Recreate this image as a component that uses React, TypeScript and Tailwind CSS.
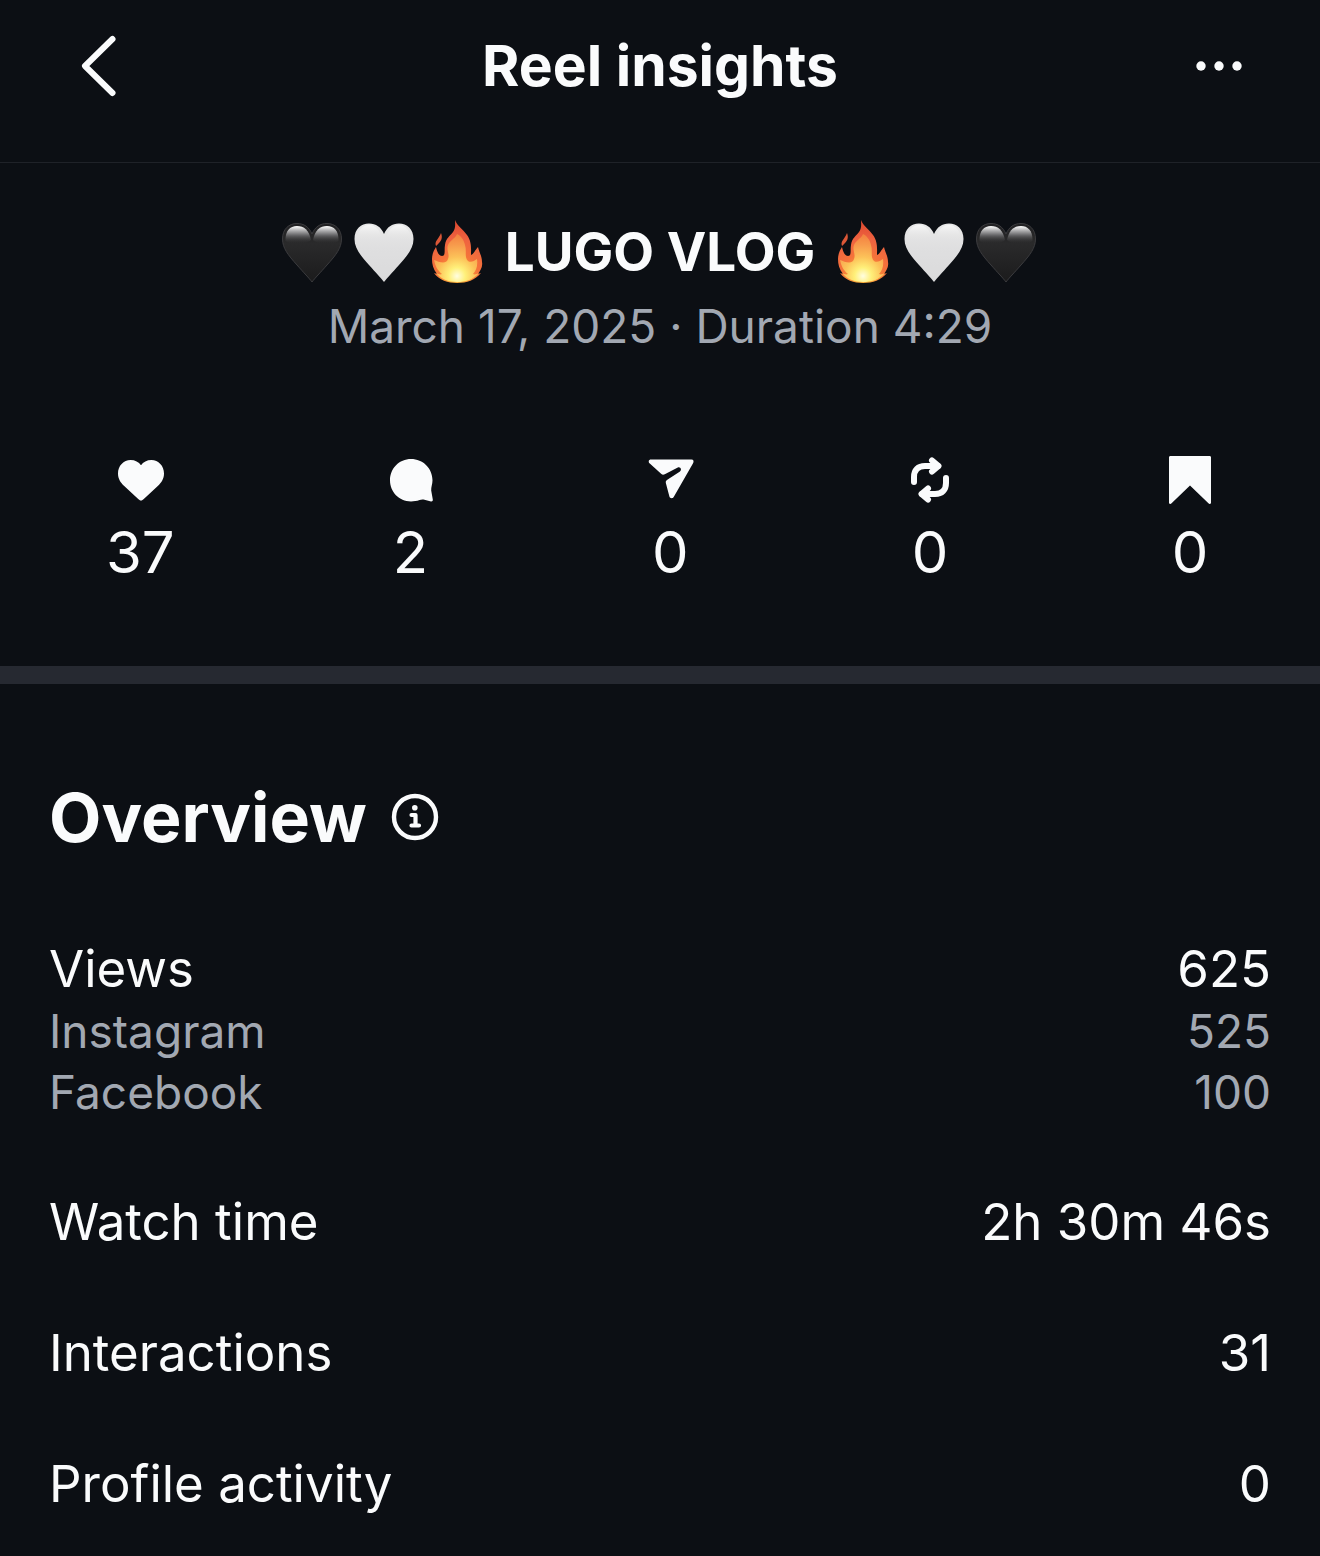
import type { ReactNode } from 'react';

type Row = { label: string; value: string; parts?: { label: string; value: string }[] };

const ROWS: Row[] = [
  {
    label: 'Views',
    value: '625',
    parts: [
      { label: 'Instagram', value: '525' },
      { label: 'Facebook', value: '100' },
    ],
  },
  { label: 'Watch time', value: '2h 30m 46s' },
  { label: 'Interactions', value: '31' },
  { label: 'Profile activity', value: '0' },
];

const HEART = 'M35 66C32 62 27 57 20 49C11 39 5.5 32 5.5 23C5.5 13 12 7.5 20 7.5C27 7.5 32 11 35 18C38 11 43 7.5 50 7.5C58 7.5 64.5 13 64.5 23C64.5 32 59 39 50 49C43 57 38 62 35 66Z';

function BlackHeart() {
  return (
    <svg viewBox="0 0 72 72" className="size-[72px] shrink-0" aria-hidden="true">
      <defs>
        <linearGradient id="blackBody" x1="0" y1="0" x2="0" y2="1">
          <stop offset="0" stopColor="#202022" />
          <stop offset="0.35" stopColor="#2a2a2b" />
          <stop offset="1" stopColor="#1b1b1c" />
        </linearGradient>
        <linearGradient id="blackShine" x1="0" y1="0" x2="0" y2="1">
          <stop offset="0" stopColor="#ffffff" />
          <stop offset="0.2" stopColor="#c0c0c1" />
          <stop offset="0.5" stopColor="#6a6a6c" />
          <stop offset="1" stopColor="#2a2a2b" stopOpacity="0" />
        </linearGradient>
      </defs>
      <path d={HEART} fill="url(#blackBody)" stroke="#3b3b3e" strokeWidth="1" />
      <path d="M8.5 25C8 15 13 10 20 10C27 10 32 14 34 24C28 29 13 29 8.5 25Z" fill="url(#blackShine)" />
      <path d="M61.5 25C62 15 57 10 50 10C43 10 38 14 36 24C42 29 57 29 61.5 25Z" fill="url(#blackShine)" />
    </svg>
  );
}

function WhiteHeart() {
  return (
    <svg viewBox="0 0 72 72" className="size-[72px] shrink-0" aria-hidden="true">
      <defs>
        <linearGradient id="whiteBody" x1="0" y1="0" x2="0" y2="1">
          <stop offset="0" stopColor="#e9e9e9" />
          <stop offset="0.4" stopColor="#dfdfe0" />
          <stop offset="1" stopColor="#dadadb" />
        </linearGradient>
        <linearGradient id="whiteShine" x1="0" y1="0" x2="0" y2="1">
          <stop offset="0" stopColor="#f8f8f8" />
          <stop offset="1" stopColor="#e2e2e2" stopOpacity="0" />
        </linearGradient>
      </defs>
      <path d={HEART} fill="url(#whiteBody)" />
      <path d="M8 24C8 15 14 9 20 9C26 9 30 13 32 20C27 23 13 25 8 24Z" fill="url(#whiteShine)" />
      <path d="M62 24C62 15 56 9 50 9C44 9 40 13 38 20C43 23 57 25 62 24Z" fill="url(#whiteShine)" />
    </svg>
  );
}

function Fire() {
  return (
    <svg viewBox="0 0 72 72" className="size-[72px] shrink-0" aria-hidden="true">
      <defs>
        <radialGradient id="fireOuter" gradientUnits="userSpaceOnUse" cx="36" cy="60" r="54">
          <stop offset="0" stopColor="#ffc83c" />
          <stop offset="0.4" stopColor="#f5733a" />
          <stop offset="0.7" stopColor="#ee6240" />
          <stop offset="1" stopColor="#e04a30" />
        </radialGradient>
        <radialGradient id="fireInner" gradientUnits="userSpaceOnUse" cx="36" cy="60" r="42">
          <stop offset="0" stopColor="#fffde0" />
          <stop offset="0.2" stopColor="#fff07a" />
          <stop offset="0.45" stopColor="#fcc259" />
          <stop offset="0.75" stopColor="#f79a4c" />
          <stop offset="1" stopColor="#f3803f" />
        </radialGradient>
      </defs>
      <path
        d="M34 4C36 10 42 13 46 19C51 26 50 33 50 39C53 38 54 34 57 31C58 36 61 40 61 46C62 51 59 55 57 58L60 57C54 64 46 67 36 67C27 67 18 64 13 57L16 58C12 53 11 48 11 43C11 38 13 34 15 31C16 36 18 40 21 40C25 40 23 34 24 29C25 22 29 20 32 16C35 12 34 8 34 4Z"
        fill="url(#fireOuter)"
      />
      <path d="M20 17C22 22 20 25 18 27C16 29 16 29 15 30C13 25 18 23 20 17Z" fill="#dc5737" />
      <path
        d="M36 18C40 20 43 24 44 29C46 35 43 41 47 45C50 47 53 45 56 43C57 50 55 55 52 58C54 59 56 58 58 57C52 64 44 66 36 66C27 66 20 63 15 57C17 58 19 59 21 58C16 54 14 49 13 44C18 46 25 49 27 43C29 38 25 34 27 29C29 24 34 23 36 18Z"
        fill="url(#fireInner)"
      />
    </svg>
  );
}

const STATS: { name: string; value: string; icon: ReactNode }[] = [
  {
    name: 'Likes',
    value: '37',
    icon: <path d="M25 44.5C23.9 44.5 23.1 43.8 22.2 43L8.2 29.9C4.5 26.5 2 22.6 2 17.4C2 9.9 7.6 4 14.6 4C19 4 22.8 6 25 9.2C27.2 6 31 4 35.4 4C42.4 4 48 9.9 48 17.4C48 22.6 45.5 26.5 41.8 29.9L27.8 43C26.9 43.8 26.1 44.5 25 44.5Z" />,
  },
  {
    name: 'Comments',
    value: '2',
    icon: <path d="M25 3C37 3 46.5 12.3 46.5 24.3C46.5 28 45 31.5 45.2 34.5L46.8 43.5C47.1 45 46 45.6 45 45.4L37.5 43.6C36 43.2 35 43.6 33.6 44.1C30.6 45.2 28 45.4 25 45.4C13 45.4 4 36 4 24.3C4 12.3 13.2 3 25 3Z" />,
  },
  {
    name: 'Shares',
    value: '0',
    icon: <path d="M4.8 3.5H45.5C47.5 3.5 48 5.2 47.2 7L27.7 41C26.7 42.7 23.9 42.6 23.4 40.6L19.9 27.2C19.5 25.5 19.9 24.6 21.3 23.7L34 15.4C36.1 14 34.5 10.3 31.8 11.6L18.8 18.3C17.3 19.1 16.3 18.9 15.1 17.8L3.8 7.6C1.9 5.8 2.8 3.5 4.8 3.5Z" />,
  },
  {
    name: 'Reposts',
    value: '0',
    icon: (
      <g fill="none" stroke="currentColor" strokeWidth="6" strokeLinecap="round" strokeLinejoin="round">
        <path d="M8 26V21C8 14 12 10 19 10H32" />
        <path d="M26 4.5L32.5 10L26 15.5" />
        <path d="M40 22V27C40 34 36 38 29 38H16" />
        <path d="M22 32.5L15.5 38L22 43.5" />
      </g>
    ),
  },
  {
    name: 'Saves',
    value: '0',
    icon: <path d="M4.5 0H43.5C44.5 0 45 .6 45 1.5V46.5C45 48 43.7 48.5 42.7 47.5L24 29.5L5.3 47.5C4.3 48.5 3 48 3 46.5V1.5C3 .6 3.5 0 4.5 0Z" />,
  },
];

export default function App() {
  return (
    <div className="min-h-screen bg-[#0c0f14] text-[#fafbfc] font-['Inter',sans-serif]">
      <header className="grid grid-cols-[1fr_auto_1fr] items-center border-b border-[#1f2228] pt-6 pb-[54px] px-[76px]">
        <button type="button" aria-label="Back" className="justify-self-start">
          <svg viewBox="0 0 46 66" className="h-[66px] w-[46px]" fill="none" stroke="currentColor" strokeWidth="6" strokeLinecap="round" strokeLinejoin="round">
            <path d="M36.5 6L9 33L36.5 60" />
          </svg>
        </button>
        <h1 className="text-[57px] leading-[84px] font-bold">Reel insights</h1>
        <button type="button" aria-label="More options" className="justify-self-end">
          <svg viewBox="0 0 50 50" className="size-[50px]" fill="currentColor">
            <circle cx="7" cy="25" r="4.7" />
            <circle cx="25" cy="25" r="4.7" />
            <circle cx="43" cy="25" r="4.7" />
          </svg>
        </button>
      </header>

      <section className="pt-[53px] pb-[82px]">
        <div className="flex items-center justify-center">
          <BlackHeart />
          <WhiteHeart />
          <Fire />
          <h2 className="mx-3 text-[53px] leading-[72px] font-bold">LUGO VLOG</h2>
          <Fire />
          <WhiteHeart />
          <BlackHeart />
        </div>
        <p className="mt-2 text-center text-[46px] leading-[60px] text-[#a2a8b2]">March 17, 2025 · Duration 4:29</p>

        <ul className="mt-[100px] flex justify-between px-[106px]">
          {STATS.map(s => (
            <li key={s.name} className="flex flex-col items-center gap-4">
              <svg viewBox="0 0 48 48" className="size-12" fill="currentColor" role="img" aria-label={s.name}>{s.icon}</svg>
              <span className="text-[58px] leading-[64px]">{s.value}</span>
            </li>
          ))}
        </ul>
      </section>

      <div className="h-[18px] bg-[#262931]" />

      <section className="px-[49px] pt-[93px] pb-10">
        <div className="flex items-center gap-6">
          <h2 className="text-[68px] leading-[80px] font-bold">Overview</h2>
          <button type="button" aria-label="About overview">
            <svg viewBox="0 0 48 48" className="size-12" fill="none" stroke="currentColor" strokeWidth="4.4" strokeLinecap="round" strokeLinejoin="round">
              <circle cx="24" cy="24" r="21" />
              <circle cx="23.8" cy="14.8" r="2.8" fill="currentColor" stroke="none" />
              <path d="M20.5 22H24.5V32.5M20.5 32.5H28" strokeWidth="4.2" />
            </svg>
          </button>
        </div>

        <dl className="mt-[79px] flex flex-col gap-[66px]">
          {ROWS.map(row => (
            <div key={row.label}>
              <div className="flex justify-between text-[51px] leading-[65px]">
                <dt>{row.label}</dt>
                <dd>{row.value}</dd>
              </div>
              {row.parts?.map(p => (
                <div key={p.label} className="flex justify-between text-[46px] leading-[61px] text-[#a2a8b2]">
                  <dt>{p.label}</dt>
                  <dd>{p.value}</dd>
                </div>
              ))}
            </div>
          ))}
        </dl>
      </section>
    </div>
  );
}
